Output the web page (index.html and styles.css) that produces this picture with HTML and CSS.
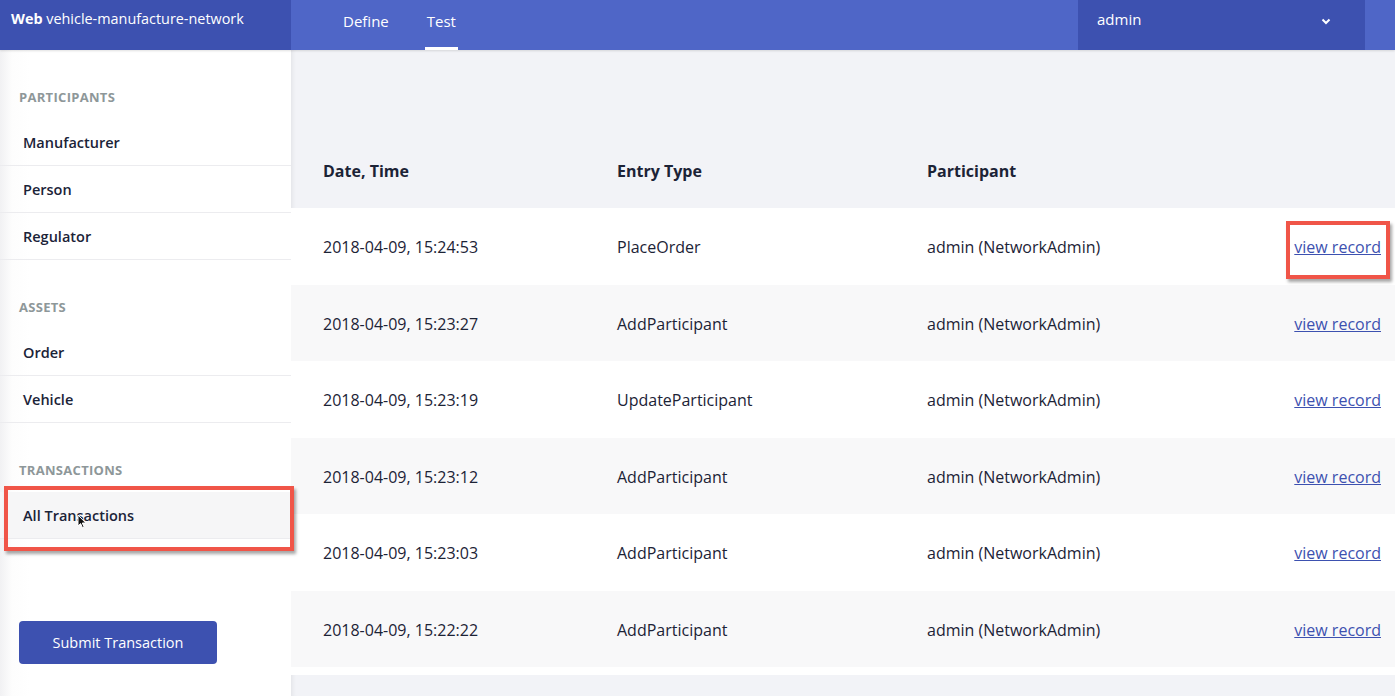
FILE: index.html
```html
<!DOCTYPE html>
<html lang="en">
<head>
<meta charset="utf-8">
<title>vehicle-manufacture-network</title>
<link rel="stylesheet" href="styles.css">
</head>
<body>
<header class="topbar">
  <div class="brand"><b>Web</b> vehicle-manufacture-network</div>
  <nav class="tabs">
    <a class="tab">Define</a>
    <a class="tab active">Test</a>
  </nav>
  <div class="user">
    <span>admin</span>
    <svg class="chev" width="10" height="7" viewBox="0 0 10 7"><path d="M1.5 1.5 L5 5 L8.5 1.5" fill="none" stroke="#fff" stroke-width="2"/></svg>
  </div>
</header>
<div class="layout">
  <aside class="sidebar">
    <section class="group">
      <h3 class="group-title">Participants</h3>
      <a class="item">Manufacturer</a>
      <a class="item">Person</a>
      <a class="item">Regulator</a>
    </section>
    <section class="group">
      <h3 class="group-title">Assets</h3>
      <a class="item">Order</a>
      <a class="item">Vehicle</a>
    </section>
    <section class="group">
      <h3 class="group-title">Transactions</h3>
      <a class="item selected">All Transactions</a>
    </section>
    <div class="submit-wrap"><button class="submit">Submit Transaction</button></div>
  </aside>
  <main class="main">
    <div class="table">
      <div class="thead">
        <div>Date, Time</div><div>Entry Type</div><div>Participant</div><div></div>
      </div>
      <div class="tbody">
        <div class="row"><div>2018-04-09, 15:24:53</div><div>PlaceOrder</div><div>admin (NetworkAdmin)</div><div><a class="link">view record</a></div></div>
        <div class="row"><div>2018-04-09, 15:23:27</div><div>AddParticipant</div><div>admin (NetworkAdmin)</div><div><a class="link">view record</a></div></div>
        <div class="row"><div>2018-04-09, 15:23:19</div><div>UpdateParticipant</div><div>admin (NetworkAdmin)</div><div><a class="link">view record</a></div></div>
        <div class="row"><div>2018-04-09, 15:23:12</div><div>AddParticipant</div><div>admin (NetworkAdmin)</div><div><a class="link">view record</a></div></div>
        <div class="row"><div>2018-04-09, 15:23:03</div><div>AddParticipant</div><div>admin (NetworkAdmin)</div><div><a class="link">view record</a></div></div>
        <div class="row"><div>2018-04-09, 15:22:22</div><div>AddParticipant</div><div>admin (NetworkAdmin)</div><div><a class="link">view record</a></div></div>
      </div>
    </div>
  </main>
</div>
<div class="annot annot-side"></div>
<div class="annot annot-link"></div>
<svg class="cursor" width="10" height="15" viewBox="0 0 10 15"><path d="M1 1 L1 12 L3.6 9.6 L5.6 14 L7.2 13.2 L5.3 9 L8.8 9 Z" fill="#111" stroke="#fff" stroke-width="1"/></svg>
</body>
</html>
```
FILE: styles.css
```css
* { box-sizing: border-box; }
html, body { margin: 0; padding: 0; }
body {
  width: 1395px;
  height: 696px;
  overflow: hidden;
  font-family: "Open Sans", "Noto Sans", "Liberation Sans", sans-serif;
  color: #1c2336;
  background: #f2f3f7;
  position: relative;
}
.topbar {
  height: 50px;
  display: flex;
  background: #4f66c7;
  color: #fff;
  box-shadow: 0 1px 2px rgba(0,0,0,0.12);
  position: relative;
  z-index: 2;
}
.brand {
  width: 291px;
  background: #3d51b0;
  padding: 9px 0 0 11px;
  font-size: 14.4px;
}
.brand b { font-weight: 700; }
.tabs {
  display: flex;
  gap: 34px;
  padding-left: 50px;
  flex: 1;
}
.tab {
  font-size: 15px;
  padding: 11px 2px 0;
  border-bottom: 3px solid transparent;
}
.tab.active { border-bottom-color: #fff; }
.user {
  width: 287px;
  margin-right: 30px;
  background: #3d51b0;
  display: flex;
  align-items: flex-start;
  justify-content: space-between;
  padding: 9px 34px 0 19px;
  font-size: 15px;
}
.chev { margin-top: 9px; }
.layout {
  display: flex;
  height: 646px;
}
.sidebar {
  width: 291px;
  background: linear-gradient(to right, #f1f1f3 0px, #fdfdfd 12px, #fff 30px);
  display: flex;
  flex-direction: column;
  flex-shrink: 0;
}
.group { padding-top: 37px; }
.group-title {
  margin: 0 0 12px 19px;
  height: 20px;
  line-height: 20px;
  font-size: 13px;
  font-weight: 700;
  color: #8e9799;
  text-transform: uppercase;
  letter-spacing: 0.3px;
}
.item {
  display: block;
  height: 47px;
  line-height: 47px;
  padding-left: 23px;
  font-size: 14.5px;
  font-weight: 600;
  color: #1b2338;
  border-bottom: 1px solid #ececef;
}
.item.selected { background: #f6f6f7; }
.submit-wrap {
  margin-top: auto;
  padding: 0 0 32px 19px;
}
.submit {
  width: 198px;
  height: 43px;
  border: 0;
  border-radius: 4px;
  background: #3d51b0;
  color: #fff;
  font-family: inherit;
  font-size: 14.5px;
}
.main {
  flex: 1;
  padding-top: 83px;
  box-shadow: inset 5px 0 5px -4px rgba(0,0,0,0.08);
}
.thead, .row {
  display: grid;
  grid-template-columns: 294px 310px 1fr auto;
  align-items: center;
  padding: 0 14px 0 32px;
  font-size: 16px;
}
.thead {
  height: 75px;
  font-weight: 700;
}
.tbody {
  background: #fff;
  padding-bottom: 8px;
}
.row { height: 76.5px; padding-top: 2px; }
.row:nth-child(even) { background: #f8f8f9; }
.link {
  color: #3d51b0;
  text-decoration: underline;
}
.annot {
  position: absolute;
  border: 4px solid #f05548;
  box-shadow: 2px 3px 3px rgba(0,0,0,0.35);
}
.annot-side { left: 4px; top: 486px; width: 290px; height: 65px; }
.annot-link { left: 1286px; top: 221px; width: 104px; height: 58px; }
.cursor { position: absolute; left: 77px; top: 514px; }
```
